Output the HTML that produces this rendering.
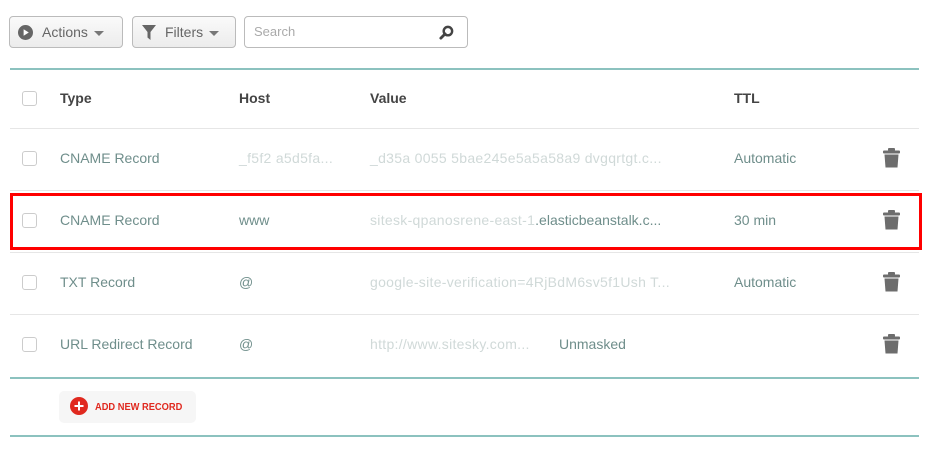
<!DOCTYPE html>
<html><head><style>
body{margin:0;width:935px;height:455px;background:#fff;font-family:"Liberation Sans",sans-serif;position:relative;overflow:hidden}
.a{position:absolute}
.btn{position:absolute;top:16px;height:32px;border:1px solid #bbb;border-radius:4px;background:linear-gradient(#fafafa,#ececec);box-sizing:border-box;color:#666;font-size:14px;line-height:30px}
.car{display:inline-block;width:0;height:0;border-left:5px solid transparent;border-right:5px solid transparent;border-top:5px solid #777;vertical-align:middle;margin-left:6px}
.line{position:absolute;left:10px;width:909px;height:2px;background:#8cc2bf}
.sep{position:absolute;left:10px;width:909px;height:1px;background:#e6e6e6}
.cb{position:absolute;left:22px;width:15px;height:15px;border:1px solid #ccc;border-radius:3px;box-sizing:border-box;background:#fff}
.t{position:absolute;font-size:14px;color:#6f8e8b;white-space:nowrap}
.h{position:absolute;font-size:14px;color:#444;font-weight:bold;top:90px}
.blur{color:#d0d9d8;letter-spacing:0.3px}
.trash{position:absolute;left:883px}
</style></head><body>
<div class="btn" style="left:9px;width:114px;padding-left:32px">Actions<span class="car"></span>
<svg class="a" style="left:8px;top:8px" width="15" height="15" viewBox="0 0 16 16"><circle cx="8" cy="8" r="8" fill="#666"/><path d="M6 4.5L11.5 8L6 11.5Z" fill="#fff"/></svg></div>
<div class="btn" style="left:132px;width:104px;padding-left:32px">Filters<span class="car"></span>
<svg class="a" style="left:9px;top:8px" width="14" height="15" viewBox="0 0 14 15"><path d="M0 0H14L8.5 7V15L5.5 12.5V7Z" fill="#666"/></svg></div>
<div class="btn" style="left:244px;width:224px;background:#fff;padding-left:9px;color:#aaa;font-size:13px">Search
<svg class="a" style="left:194px;top:8px" width="15" height="15" viewBox="0 0 16 16"><circle cx="9.5" cy="6.5" r="4.5" fill="none" stroke="#444" stroke-width="2.6"/><path d="M6.5 9.5L2 14" stroke="#444" stroke-width="3" stroke-linecap="round"/></svg></div>

<div class="line" style="top:68px"></div>
<div class="cb" style="top:91px"></div>
<div class="h" style="left:60px">Type</div>
<div class="h" style="left:239px">Host</div>
<div class="h" style="left:370px">Value</div>
<div class="h" style="left:734px">TTL</div>
<div class="sep" style="top:128px"></div>

<div class="cb" style="top:151px"></div>
<div class="t" style="left:60px;top:150px">CNAME Record</div>
<div class="t blur" style="left:239px;top:150px">_f5f2 a5d5fa...</div>
<div class="t blur" style="left:370px;top:150px">_d35a 0055 5bae245e5a5a58a9 dvgqrtgt.c...</div>
<div class="t" style="left:734px;top:150px">Automatic</div>
<svg class="trash" style="top:148px" width="17" height="20" viewBox="0 0 17 20"><rect x="0" y="2.5" width="17" height="3" rx="1" fill="#6d6d6d"/><rect x="5" y="0" width="7" height="3" rx="1" fill="#6d6d6d"/><path d="M1.5 6.5H15.5L14.5 19.5H2.5Z" fill="#6d6d6d"/></svg>
<div class="sep" style="top:190px"></div>

<div class="a" style="left:10px;top:193px;width:912px;height:57px;border:3px solid #f00;box-sizing:border-box"></div>
<div class="cb" style="top:213px"></div>
<div class="t" style="left:60px;top:212px">CNAME Record</div>
<div class="t" style="left:239px;top:212px">www</div>
<div class="t" style="left:370px;top:212px"><span class="blur">sitesk-qpanosrene-east-1</span>.elasticbeanstalk.c...</div>
<div class="t" style="left:734px;top:212px">30 min</div>
<svg class="trash" style="top:210px" width="17" height="20" viewBox="0 0 17 20"><rect x="0" y="2.5" width="17" height="3" rx="1" fill="#6d6d6d"/><rect x="5" y="0" width="7" height="3" rx="1" fill="#6d6d6d"/><path d="M1.5 6.5H15.5L14.5 19.5H2.5Z" fill="#6d6d6d"/></svg>
<div class="sep" style="top:252px"></div>

<div class="cb" style="top:275px"></div>
<div class="t" style="left:60px;top:274px">TXT Record</div>
<div class="t" style="left:239px;top:274px">@</div>
<div class="t blur" style="left:370px;top:274px">google-site-verification=4RjBdM6sv5f1Ush T...</div>
<div class="t" style="left:734px;top:274px">Automatic</div>
<svg class="trash" style="top:272px" width="17" height="20" viewBox="0 0 17 20"><rect x="0" y="2.5" width="17" height="3" rx="1" fill="#6d6d6d"/><rect x="5" y="0" width="7" height="3" rx="1" fill="#6d6d6d"/><path d="M1.5 6.5H15.5L14.5 19.5H2.5Z" fill="#6d6d6d"/></svg>
<div class="sep" style="top:314px"></div>

<div class="cb" style="top:337px"></div>
<div class="t" style="left:60px;top:336px">URL Redirect Record</div>
<div class="t" style="left:239px;top:336px">@</div>
<div class="t blur" style="left:370px;top:336px">http://www.sitesky.com...</div>
<div class="t" style="left:559px;top:336px">Unmasked</div>
<svg class="trash" style="top:334px" width="17" height="20" viewBox="0 0 17 20"><rect x="0" y="2.5" width="17" height="3" rx="1" fill="#6d6d6d"/><rect x="5" y="0" width="7" height="3" rx="1" fill="#6d6d6d"/><path d="M1.5 6.5H15.5L14.5 19.5H2.5Z" fill="#6d6d6d"/></svg>

<div class="line" style="top:377px"></div>
<div class="a" style="left:59px;top:391px;width:137px;height:32px;background:#f6f6f6;border-radius:5px"></div>
<svg class="a" style="left:70px;top:397px" width="18" height="18" viewBox="0 0 18 18"><circle cx="9" cy="9" r="9" fill="#e0291f"/><path d="M9 4.5V13.5M4.5 9H13.5" stroke="#fff" stroke-width="2"/></svg>
<div class="a" style="left:95px;top:402px;font-size:10px;color:#e0291f;font-weight:bold;transform:scaleX(0.93);transform-origin:left">ADD NEW RECORD</div>
<div class="line" style="top:435px"></div>
</body></html>
